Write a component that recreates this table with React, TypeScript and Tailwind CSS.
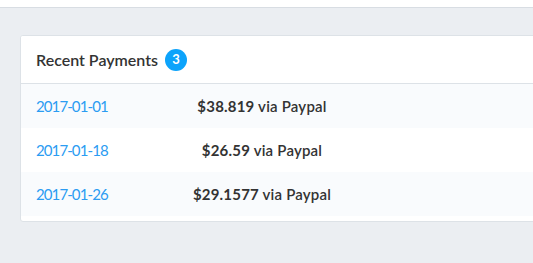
import React from 'react';

type Payment = { date: string; amount: string };

const payments: Payment[] = [
    { date: '2017-01-01', amount: '$38.819' },
    { date: '2017-01-18', amount: '$26.59' },
    { date: '2017-01-26', amount: '$29.1577' },
];

const App: React.FC = () => {
    return (
        <div className="h-[263px] w-[533px] overflow-hidden bg-[#ebeef2] font-['Lato','Open_Sans',sans-serif]">
            {/* top bar */}
            <div className="h-[8px] border-b border-[#d8dde3] bg-white"></div>

            <div className="pl-[20px] pt-[27px]">
                <div className="w-[560px] overflow-hidden rounded-[3px] border border-[#dde2e7] bg-white pb-[5px]">
                    {/* header */}
                    <div className="flex h-[48px] items-center border-b border-[#dde2e7] bg-white pl-[15px]">
                        <span className="text-[16px] font-semibold text-[#333]">Recent Payments</span>
                        <span className="ml-[7px] flex h-[22px] w-[22px] items-center justify-center rounded-full bg-[#0ca3fb] text-[13px] font-bold text-white">
                            3
                        </span>
                    </div>

                    {/* rows */}
                    {payments.map((p, i) => (
                        <div
                            key={p.date}
                            className={`flex h-[44px] items-center ${i % 2 === 0 ? 'bg-[#f9fbfd]' : 'bg-white'}`}
                        >
                            <div className="w-[157px] pl-[15px] text-[15px] tracking-[-0.9px] text-[#2b9cf2]">{p.date}</div>
                            <div className="w-[168px] text-center text-[15px] font-semibold tracking-[0.2px] text-[#333]">
                                <span className="font-bold">{p.amount}</span> via Paypal
                            </div>
                        </div>
                    ))}
                </div>
            </div>
        </div>
    );
};

export default App;
